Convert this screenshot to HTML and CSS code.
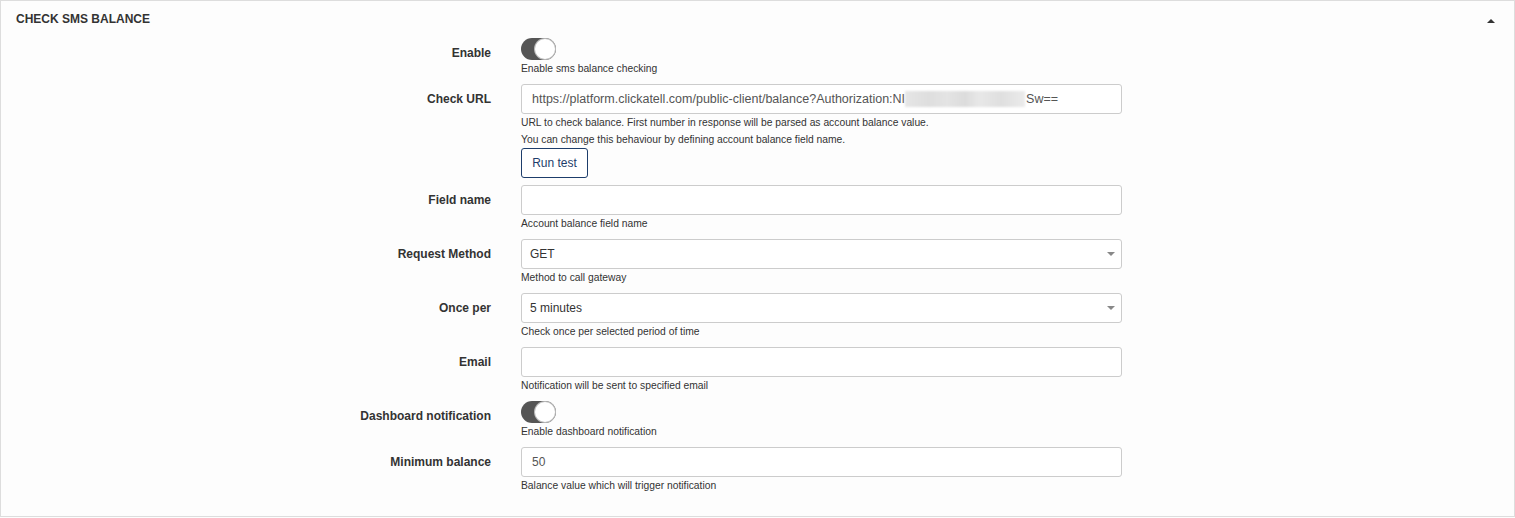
FILE: index.html
```html
<!DOCTYPE html>
<html>
<head>
<meta charset="utf-8">
<link rel="stylesheet" href="styles.css">
</head>
<body>
<div class="panel">
  <div class="panel-head">
    <span class="panel-title">CHECK SMS BALANCE</span>
    <span class="caret-up"></span>
  </div>
  <div class="panel-body">
    <div class="row">
      <label class="lbl">Enable</label>
      <div class="ctl">
        <span class="toggle"><span class="knob"></span></span>
        <div class="help">Enable sms balance checking</div>
      </div>
    </div>
    <div class="row">
      <label class="lbl">Check URL</label>
      <div class="ctl">
        <div class="input url">https://platform.clickatell.com/public-client/balance?Authorization:NI<span class="blur"></span>Sw==</div>
        <div class="help">URL to check balance. First number in response will be parsed as account balance value.</div>
        <div class="help">You can change this behaviour by defining account balance field name.</div>
        <button class="btn">Run test</button>
      </div>
    </div>
    <div class="row">
      <label class="lbl">Field name</label>
      <div class="ctl">
        <div class="input"></div>
        <div class="help">Account balance field name</div>
      </div>
    </div>
    <div class="row">
      <label class="lbl">Request Method</label>
      <div class="ctl">
        <div class="input select">GET<span class="arrow"></span></div>
        <div class="help">Method to call gateway</div>
      </div>
    </div>
    <div class="row">
      <label class="lbl">Once per</label>
      <div class="ctl">
        <div class="input select">5 minutes<span class="arrow"></span></div>
        <div class="help">Check once per selected period of time</div>
      </div>
    </div>
    <div class="row">
      <label class="lbl">Email</label>
      <div class="ctl">
        <div class="input"></div>
        <div class="help">Notification will be sent to specified email</div>
      </div>
    </div>
    <div class="row">
      <label class="lbl">Dashboard notification</label>
      <div class="ctl">
        <span class="toggle"><span class="knob"></span></span>
        <div class="help">Enable dashboard notification</div>
      </div>
    </div>
    <div class="row">
      <label class="lbl">Minimum balance</label>
      <div class="ctl">
        <div class="input num">50</div>
        <div class="help">Balance value which will trigger notification</div>
      </div>
    </div>
  </div>
</div>
</body>
</html>
```
FILE: styles.css
```css
html, body {
  margin: 0;
  padding: 0;
  background: #fdfdfd;
}
body {
  font-family: "Liberation Sans", Arial, sans-serif;
  color: #333;
  overflow: hidden;
}
.panel {
  border: 1px solid #ddd;
  width: 1515px;
  height: 517px;
  box-sizing: border-box;
  background: #fdfdfd;
}
.panel-head {
  display: flex;
  align-items: center;
  justify-content: space-between;
  height: 35px;
  padding: 0 19px 0 15px;
}
.panel-title {
  font-size: 12px;
  font-weight: bold;
  color: #333;
}
.caret-up {
  width: 0;
  height: 0;
  border-left: 4px solid transparent;
  border-right: 4px solid transparent;
  border-bottom: 4px solid #333;
  position: relative;
  top: 2px;
}
.panel-body {
  padding-top: 2px;
}
.row {
  display: grid;
  grid-template-columns: 490px 601px;
  column-gap: 30px;
  margin-bottom: 7px;
}
.lbl {
  text-align: right;
  font-size: 12px;
  font-weight: bold;
  line-height: 17px;
  padding-top: 7px;
  color: #333;
}
.ctl {
  display: flex;
  flex-direction: column;
  align-items: flex-start;
}
.toggle {
  display: block;
  width: 35px;
  height: 22px;
  border-radius: 11px;
  background: #555;
  position: relative;
}
.knob {
  position: absolute;
  right: 1px;
  top: 1px;
  width: 20px;
  height: 20px;
  border-radius: 50%;
  background: #fff;
  box-shadow: 0 0 0 1px #bbb;
}
.input {
  width: 601px;
  height: 30px;
  box-sizing: border-box;
  border: 1px solid #ccc;
  border-radius: 3px;
  background: #fff;
  font-size: 12px;
  line-height: 28px;
  padding: 0 10px;
  color: #555;
  display: flex;
  align-items: center;
  white-space: nowrap;
}
.input.url {
  font-size: 12.5px;
}
.input.select {
  padding-left: 8px;
  color: #333;
  position: relative;
}
.arrow {
  position: absolute;
  right: 6px;
  top: 12px;
  width: 0;
  height: 0;
  border-left: 4px solid transparent;
  border-right: 4px solid transparent;
  border-top: 4px solid #888;
}
.blur {
  display: inline-block;
  width: 120px;
  height: 16px;
  margin: 0 1px 0 0;
  background: linear-gradient(90deg, #e6e6e6 0, #dedede 20%, #e4e4e4 35%, #dcdcdc 50%, #e8e8e8 62%, #dfdfdf 80%, #ebebeb 100%);
  filter: blur(1px);
}
.help {
  font-size: 10.3px;
  line-height: 17px;
  color: #333;
}
.btn {
  height: 30px;
  width: 67px;
  border: 1px solid #1d3d6b;
  border-radius: 3px;
  background: #fff;
  color: #1d3d6b;
  font-family: "Liberation Sans", Arial, sans-serif;
  font-size: 12px;
  padding: 0;
}
```
